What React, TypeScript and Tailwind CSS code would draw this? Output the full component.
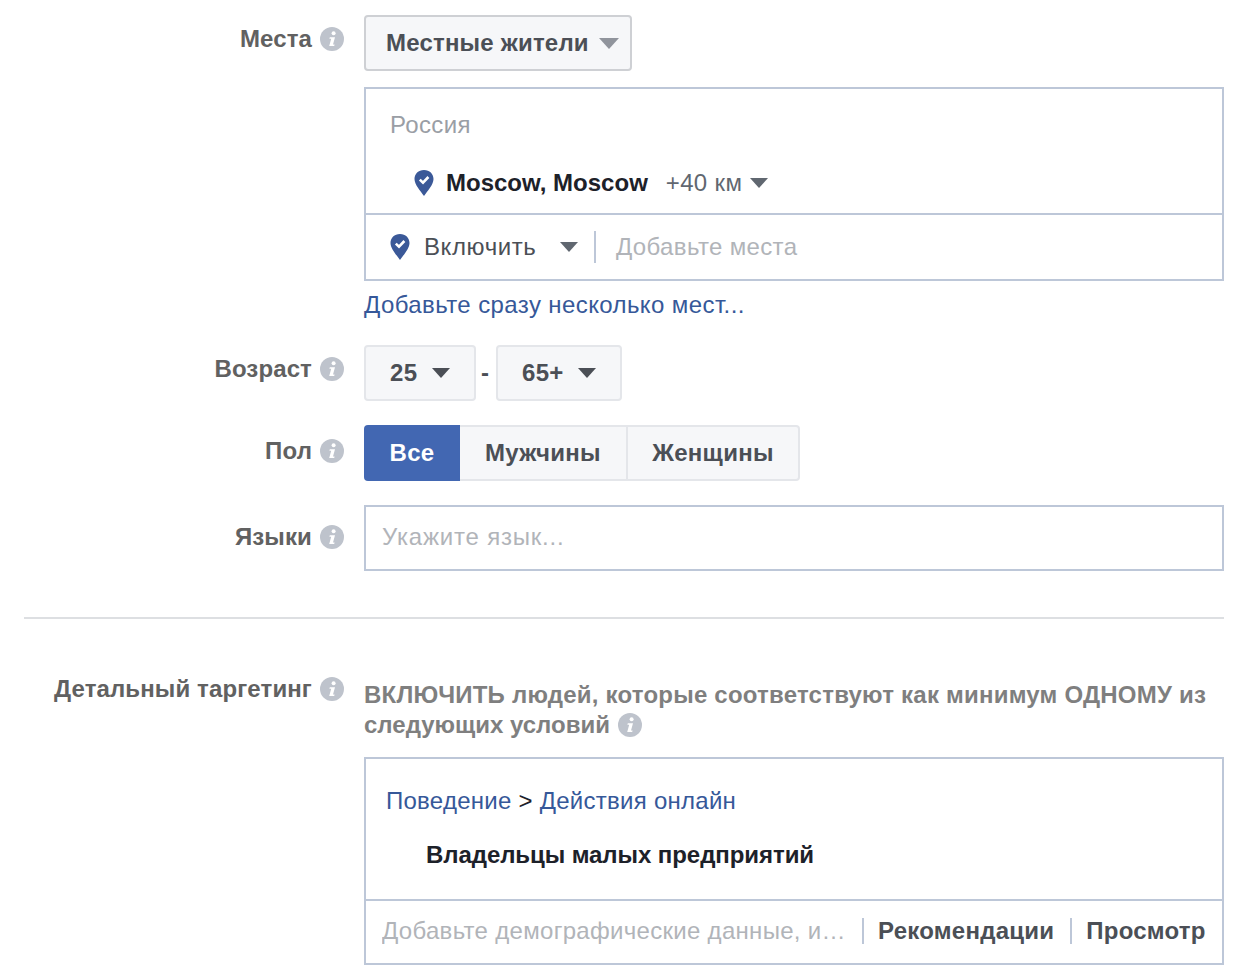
import type { ReactNode } from 'react';

function InfoIcon() {
  return (
    <svg viewBox="0 0 24 24" className="h-6 w-6 shrink-0">
      <circle cx="12" cy="12" r="12" fill="#bec3cc" />
      <circle cx="13.6" cy="6.2" r="2" fill="#fff" />
      <path d="M9.800 10.200h5.200l-2 7.300h1.600l-.4 1.600H9.200l2-7.300H9.400z" fill="#fff" />
    </svg>
  );
}

function Pin() {
  return (
    <svg viewBox="0 0 20 26" className="h-[26px] w-5 shrink-0">
      <path d="M10 0C4.400 0 .5 3.900.5 9c0 5.600 5.700 11.500 9.500 17 3.800-5.500 9.500-11.400 9.500-17C19.500 3.900 15.600 0 10 0z" fill="#3b5998" />
      <path d="M5.800 9.600l3.200 3 5.400-5.600" fill="none" stroke="#fff" strokeWidth="2.600" />
    </svg>
  );
}

function Caret({ color = '#4b4f56', className = 'h-2.5 w-[18px]' }: { color?: string; className?: string }) {
  return (
    <svg viewBox="0 0 18 10" preserveAspectRatio="none" className={`shrink-0 ${className}`}>
      <path d="M0 0h18l-9 10z" fill={color} />
    </svg>
  );
}

function Row({ label, top, children }: { label: string; top: string; children: ReactNode }) {
  return (
    <div className="flex items-start">
      <div className={`flex w-[320px] shrink-0 items-center justify-end gap-2 ${top}`}>
        <span className="text-[24px] leading-[30px] font-bold tracking-[0.12px] text-[#616161]">{label}</span>
        <InfoIcon />
      </div>
      <div className="ml-5 w-[860px]">{children}</div>
    </div>
  );
}

export default function App() {
  return (
    <div className="h-[980px] overflow-hidden bg-white pt-[15px] pl-6 font-['Liberation_Sans',Arial,sans-serif] text-[24px] text-[#4b4f56]">
      <Row label="Места" top="pt-[9px]">
        <button
          type="button"
          className="flex h-14 w-[268px] items-center gap-2.5 rounded border-2 border-[#ced0d4] bg-[#f6f7f9] pl-5 font-bold tracking-[0.2px]"
        >
          Местные жители
          <Caret color="#90949c" className="h-[11px] w-5" />
        </button>
        <div className="mt-4 border-2 border-[#bdc7d8]">
          <div className="h-[124px] pt-[20px] pl-6">
            <div className="leading-8 tracking-[0.35px] text-[#9a9ea5]">Россия</div>
            <div className="mt-[26px] ml-6 flex h-8 items-center">
              <Pin />
              <span className="ml-3 font-bold text-[#1d2129]">Moscow, Moscow</span>
              <span className="ml-[18px] tracking-[0.35px] text-[#616770]">+40 км</span>
              <span className="ml-2">
                <Caret color="#606770" />
              </span>
            </div>
          </div>
          <div className="flex h-[66px] items-center border-t-2 border-[#bdc7d8] pl-6">
            <Pin />
            <span className="ml-3.5 w-[136px] tracking-[0.6px] text-[#4b4f56]">Включить</span>
            <Caret color="#606770" />
            <div className="ml-4 h-8 w-0.5 bg-[#bdc7d8]" />
            <span className="ml-5 tracking-[0.35px] text-[#b1b4b9]">Добавьте места</span>
          </div>
        </div>
        <a className="mt-2 block h-8 leading-8 tracking-[0.4px] text-[#365899]">Добавьте сразу несколько мест...</a>
      </Row>

      <div className="mt-6">
        <Row label="Возраст" top="pt-[9px]">
          <div className="flex items-center">
            <button
              type="button"
              className="flex h-14 w-28 items-center gap-[15px] rounded border-2 border-[#e4e6ea] bg-[#f6f7f9] pl-6 font-bold tracking-[0.3px]"
            >
              25
              <Caret />
            </button>
            <span className="w-5 pr-0.5 text-center font-bold">-</span>
            <button
              type="button"
              className="flex h-14 w-[126px] items-center gap-3.5 rounded border-2 border-[#e4e6ea] bg-[#f6f7f9] pl-6 font-bold tracking-[0.3px]"
            >
              65+
              <Caret />
            </button>
          </div>
        </Row>
      </div>

      <div className="mt-6">
        <Row label="Пол" top="pt-[11px]">
          <div className="flex h-14 w-[436px] font-bold tracking-[0.3px]">
            <div className="flex w-24 items-center justify-center rounded-l bg-[#4267b2] text-white">Все</div>
            <div className="flex w-[168px] items-center justify-center border-y-2 border-r-2 border-[#e4e6ea] bg-[#f6f7f9]">
              Мужчины
            </div>
            <div className="flex w-[172px] items-center justify-center rounded-r border-y-2 border-r-2 border-[#e4e6ea] bg-[#f6f7f9]">
              Женщины
            </div>
          </div>
        </Row>
      </div>

      <div className="mt-6">
        <Row label="Языки" top="pt-[17px]">
          <div className="flex h-[66px] items-center border-2 border-[#bdc7d8] pb-0.5 pl-4 tracking-[0.8px] text-[#b1b4b9]">
            Укажите язык...
          </div>
        </Row>
      </div>

      <div className="mt-[46px] h-0.5 w-[1200px] bg-[#dddfe2]" />

      <div className="mt-[61px]">
        <Row label="Детальный таргетинг" top="-mt-1.5">
          <div className="text-[24px] leading-[30px] font-bold text-[#7f7f7f]">
            <span className="tracking-[0.22px]">ВКЛЮЧИТЬ людей, которые соответствуют как минимум ОДНОМУ из</span>
            <br />
            <span className="flex items-center gap-2">
              следующих условий
              <InfoIcon />
            </span>
          </div>
          <div className="mt-[17px] border-2 border-[#bdc7d8]">
            <div className="h-[140px] pt-[26px] pl-5">
              <div className="leading-8 tracking-[0.26px]">
                <a className="text-[#365899]">Поведение</a>
                <span className="text-[#1d2129]"> &gt; </span>
                <a className="text-[#365899]">Действия онлайн</a>
              </div>
              <div className="mt-[22px] ml-10 leading-8 font-bold tracking-[-0.07px] text-[#1d2129]">
                Владельцы малых предприятий
              </div>
            </div>
            <div className="flex h-[64px] items-center border-t-2 border-[#bdc7d8] pb-[3px] pl-4">
              <span className="w-[480px] shrink-0 truncate tracking-[0.3px] text-[#b1b4b9]">
                Добавьте демографические данные, и…
              </span>
              <div className="h-[26px] w-0.5 bg-[#bdc7d8]" />
              <span className="ml-3.5 font-bold tracking-[0.25px]">Рекомендации</span>
              <div className="ml-4 h-[26px] w-0.5 bg-[#bdc7d8]" />
              <span className="ml-3.5 font-bold tracking-[0.25px]">Просмотр</span>
            </div>
          </div>
        </Row>
      </div>
    </div>
  );
}
